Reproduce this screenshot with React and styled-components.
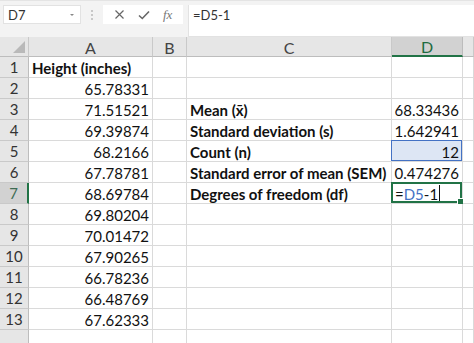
import React from 'react';
import styled, { createGlobalStyle } from 'styled-components';

const GlobalStyle = createGlobalStyle`
  html, body {
    margin: 0;
    padding: 0;
    background: #fff;
  }
  body {
    font-family: Lato, "Liberation Sans", sans-serif;
    overflow: hidden;
  }
`;

const Window = styled.div`
  width: 474px;
  height: 343px;
  overflow: hidden;
  background: #f3f3f3;
  display: flex;
  flex-direction: column;
`;

const Toolbar = styled.div`
  height: 44px;
  display: flex;
  align-items: flex-start;
  padding-top: 4px;
  box-sizing: border-box;
  border-top: 1px solid #e4e4e4;
`;

const NameBox = styled.div`
  margin-left: 3px;
  width: 78px;
  height: 19px;
  background: #fff;
  border: 1px solid #e2e2e2;
  box-sizing: border-box;
  display: flex;
  align-items: center;
  justify-content: space-between;
  padding: 0 6px 0 4px;
  font-size: 13px;
  color: #333;
`;

const Caret = styled.span`
  width: 0;
  height: 0;
  border-left: 2px solid transparent;
  border-right: 2px solid transparent;
  border-top: 2px solid #888;
`;

const Grip = styled.div`
  width: 22px;
  height: 19px;
  display: flex;
  flex-direction: column;
  align-items: center;
  justify-content: center;
  gap: 2px;

  span {
    width: 2px;
    height: 2px;
    background: #c8c8c8;
  }
`;

const FuncButtons = styled.div`
  width: 80px;
  height: 19px;
  background: #fff;
  display: flex;
  align-items: center;
  justify-content: space-around;
  padding: 0 4px;
  box-sizing: border-box;
`;

const Fx = styled.span`
  font-family: "Liberation Serif", serif;
  font-style: italic;
  font-size: 13px;
  color: #777;
`;

const FormulaInput = styled.div`
  margin-left: 5px;
  flex: 1;
  height: 32px;
  background: #fff;
  border-left: 1px solid #e2e2e2;
  border-bottom: 1px solid #e2e2e2;
  box-sizing: border-box;
  padding: 2px 0 0 4px;
  font-size: 13px;
  color: #333;
`;

const Sheet = styled.div`
  flex: 1;
  display: grid;
  grid-template-columns: 29px 124px 34px 205px 71px 11px;
  grid-auto-rows: 21px;
  grid-template-rows: 20px;
  background: #fff;
`;

const ColHead = styled.div`
  background: ${(p) => (p.$active ? '#d2d2d2' : '#e6e6e6')};
  border-right: 1px solid ${(p) => (p.$active ? '#bcbcbc' : '#c9c9c9')};
  border-bottom: ${(p) => (p.$active ? '2px solid #217346' : '1px solid #bdbdbd')};
  box-sizing: border-box;
  display: flex;
  align-items: center;
  justify-content: center;
  font-size: 16px;
  color: ${(p) => (p.$active ? '#1e6b40' : '#444')};
  padding-top: 1px;
`;

const Corner = styled(ColHead)`
  position: relative;
  &::after {
    content: '';
    position: absolute;
    right: 3px;
    bottom: 3px;
    width: 0;
    height: 0;
    border-left: 12px solid transparent;
    border-bottom: 12px solid #b9b9b9;
  }
`;

const RowHead = styled.div`
  background: ${(p) => (p.$active ? '#d2d2d2' : '#e6e6e6')};
  border-right: ${(p) => (p.$active ? '2px solid #217346' : '1px solid #bdbdbd')};
  border-bottom: 1px solid #c9c9c9;
  box-sizing: border-box;
  display: flex;
  align-items: center;
  justify-content: center;
  font-size: 15px;
  color: ${(p) => (p.$active ? '#3d6b52' : '#333')};
`;

const Cell = styled.div`
  position: relative;
  border-right: 1px solid #dadada;
  border-bottom: 1px solid #dadada;
  box-sizing: border-box;
  display: flex;
  align-items: center;
  justify-content: ${(p) => (p.$right ? 'flex-end' : 'flex-start')};
  padding: 1px 3px 0 3px;
  font-size: 15px;
  font-weight: ${(p) => (p.$bold ? 700 : 400)};
  color: #111;
  white-space: nowrap;
  background: ${(p) => (p.$ref ? '#dde6f4' : '#fff')};
`;

const RefBox = styled.span`
  position: absolute;
  inset: -1px 0 0 -1px;
  border: 1px solid #4472c4;
  pointer-events: none;
`;

const ActiveBox = styled.span`
  position: absolute;
  inset: -1px 0 0 -1px;
  border: 2px solid #217346;
  pointer-events: none;

  &::after {
    content: '';
    position: absolute;
    right: -4px;
    bottom: -4px;
    width: 5px;
    height: 5px;
    background: #217346;
    border: 1px solid #fff;
  }
`;

const RefText = styled.span`
  color: #4472c4;
`;

const Cursor = styled.span`
  display: inline-block;
  width: 1px;
  height: 17px;
  background: #111;
  margin-left: 1px;
  vertical-align: middle;
`;

const heights = [
  null,
  '65.78331',
  '71.51521',
  '69.39874',
  '68.2166',
  '67.78781',
  '68.69784',
  '69.80204',
  '70.01472',
  '67.90265',
  '66.78236',
  '66.48769',
  '67.62333',
];

const stats = {
  3: ['Mean (x̄)', '68.33436'],
  4: ['Standard deviation (s)', '1.642941'],
  5: ['Count (n)', '12'],
  6: ['Standard error of mean (SEM)', '0.474276'],
  7: ['Degrees of freedom (df)', null],
};

const XIcon = () => (
  <svg width="11" height="11" viewBox="0 0 11 11">
    <path d="M1.5 1.5 L9.5 9.5 M9.5 1.5 L1.5 9.5" stroke="#666" strokeWidth="1.2" fill="none" />
  </svg>
);

const CheckIcon = () => (
  <svg width="12" height="10" viewBox="0 0 12 10">
    <path d="M1 5.5 L4.3 8.5 L11 1.5" stroke="#666" strokeWidth="1.6" fill="none" />
  </svg>
);

const App = () => {
  const rows = [];
  for (let r = 1; r <= 14; r++) {
    const stat = stats[r];
    const active = r === 7;
    rows.push(
      <React.Fragment key={r}>
        {/* row 14 only peeks in below the fold, its label is out of view */}
        <RowHead $active={active}>{r < 14 ? r : ''}</RowHead>
        {r === 1 ? (
          <Cell $bold>Height (inches)</Cell>
        ) : (
          <Cell $right>{heights[r - 1] || ''}</Cell>
        )}
        <Cell />
        <Cell $bold>{stat ? stat[0] : ''}</Cell>
        {active ? (
          <Cell>
            =<RefText>D5</RefText>-1
            <Cursor />
            <ActiveBox />
          </Cell>
        ) : (
          <Cell $right $ref={r === 5}>
            {stat ? stat[1] : ''}
            {r === 5 && <RefBox />}
          </Cell>
        )}
        <Cell />
      </React.Fragment>
    );
  }

  return (
    <>
      <GlobalStyle />
      <Window>
        <Toolbar>
          <NameBox>
            D7
            <Caret />
          </NameBox>
          <Grip>
            <span />
            <span />
            <span />
          </Grip>
          <FuncButtons>
            <XIcon />
            <CheckIcon />
            <Fx>fx</Fx>
          </FuncButtons>
          <FormulaInput>=D5-1</FormulaInput>
        </Toolbar>
        <Sheet>
          <Corner />
          <ColHead>A</ColHead>
          <ColHead>B</ColHead>
          <ColHead>C</ColHead>
          <ColHead $active>D</ColHead>
          <ColHead />
          {rows}
        </Sheet>
      </Window>
    </>
  );
};

export default App;
